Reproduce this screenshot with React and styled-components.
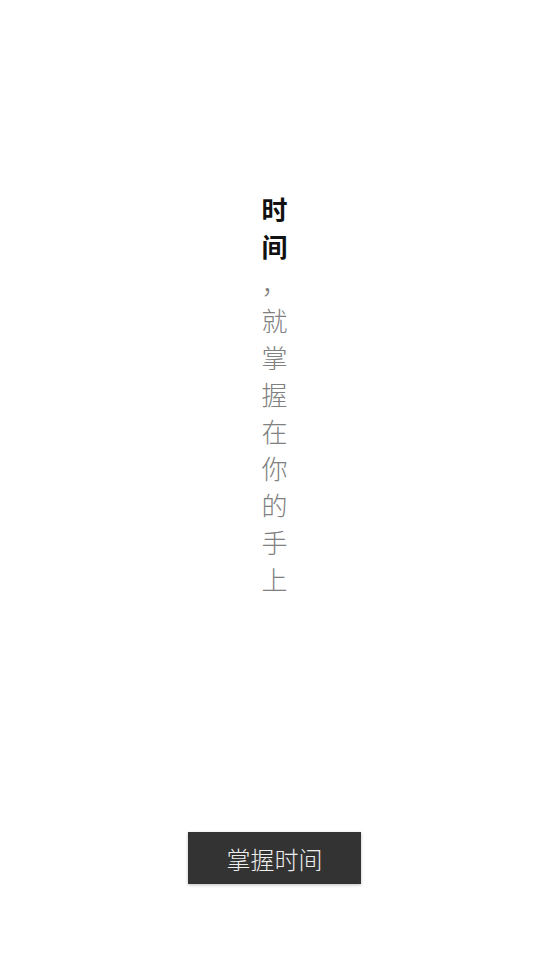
import React from 'react';
import styled, { createGlobalStyle } from 'styled-components';

const GlobalStyle = createGlobalStyle`
  html, body {
    margin: 0;
    padding: 0;
    background: #fff;
    font-family: "Noto Sans CJK SC", "Noto Sans", sans-serif;
  }
`;

const Page = styled.div`
  height: 100vh;
  display: flex;
  flex-direction: column;
  align-items: center;
  box-sizing: border-box;
  padding: 190px 0 92px;
`;

const Poem = styled.div`
  flex: 1;
  width: 1em;
  font-size: 26px;
  line-height: 37px;
  word-break: break-all;
  line-break: anywhere;
`;

const Title = styled.h1`
  margin: 0;
  font-size: inherit;
  line-height: inherit;
  color: #111;
  font-weight: 700;
`;

const Line = styled.p`
  margin: 0;
  color: #808080;
  font-weight: 300;
`;

const Button = styled.button`
  width: 173px;
  height: 52px;
  border: none;
  background: #333;
  color: #eee;
  font-family: inherit;
  font-size: 24px;
  font-weight: 300;
  box-shadow: 0 1px 3px rgba(0, 0, 0, 0.25);
  cursor: pointer;
`;

export default function App() {
  return (
    <>
      <GlobalStyle />
      <Page>
        <Poem>
          <Title>时间</Title>
          <Line>，就掌握在你的手上</Line>
        </Poem>
        <Button>掌握时间</Button>
      </Page>
    </>
  );
}
